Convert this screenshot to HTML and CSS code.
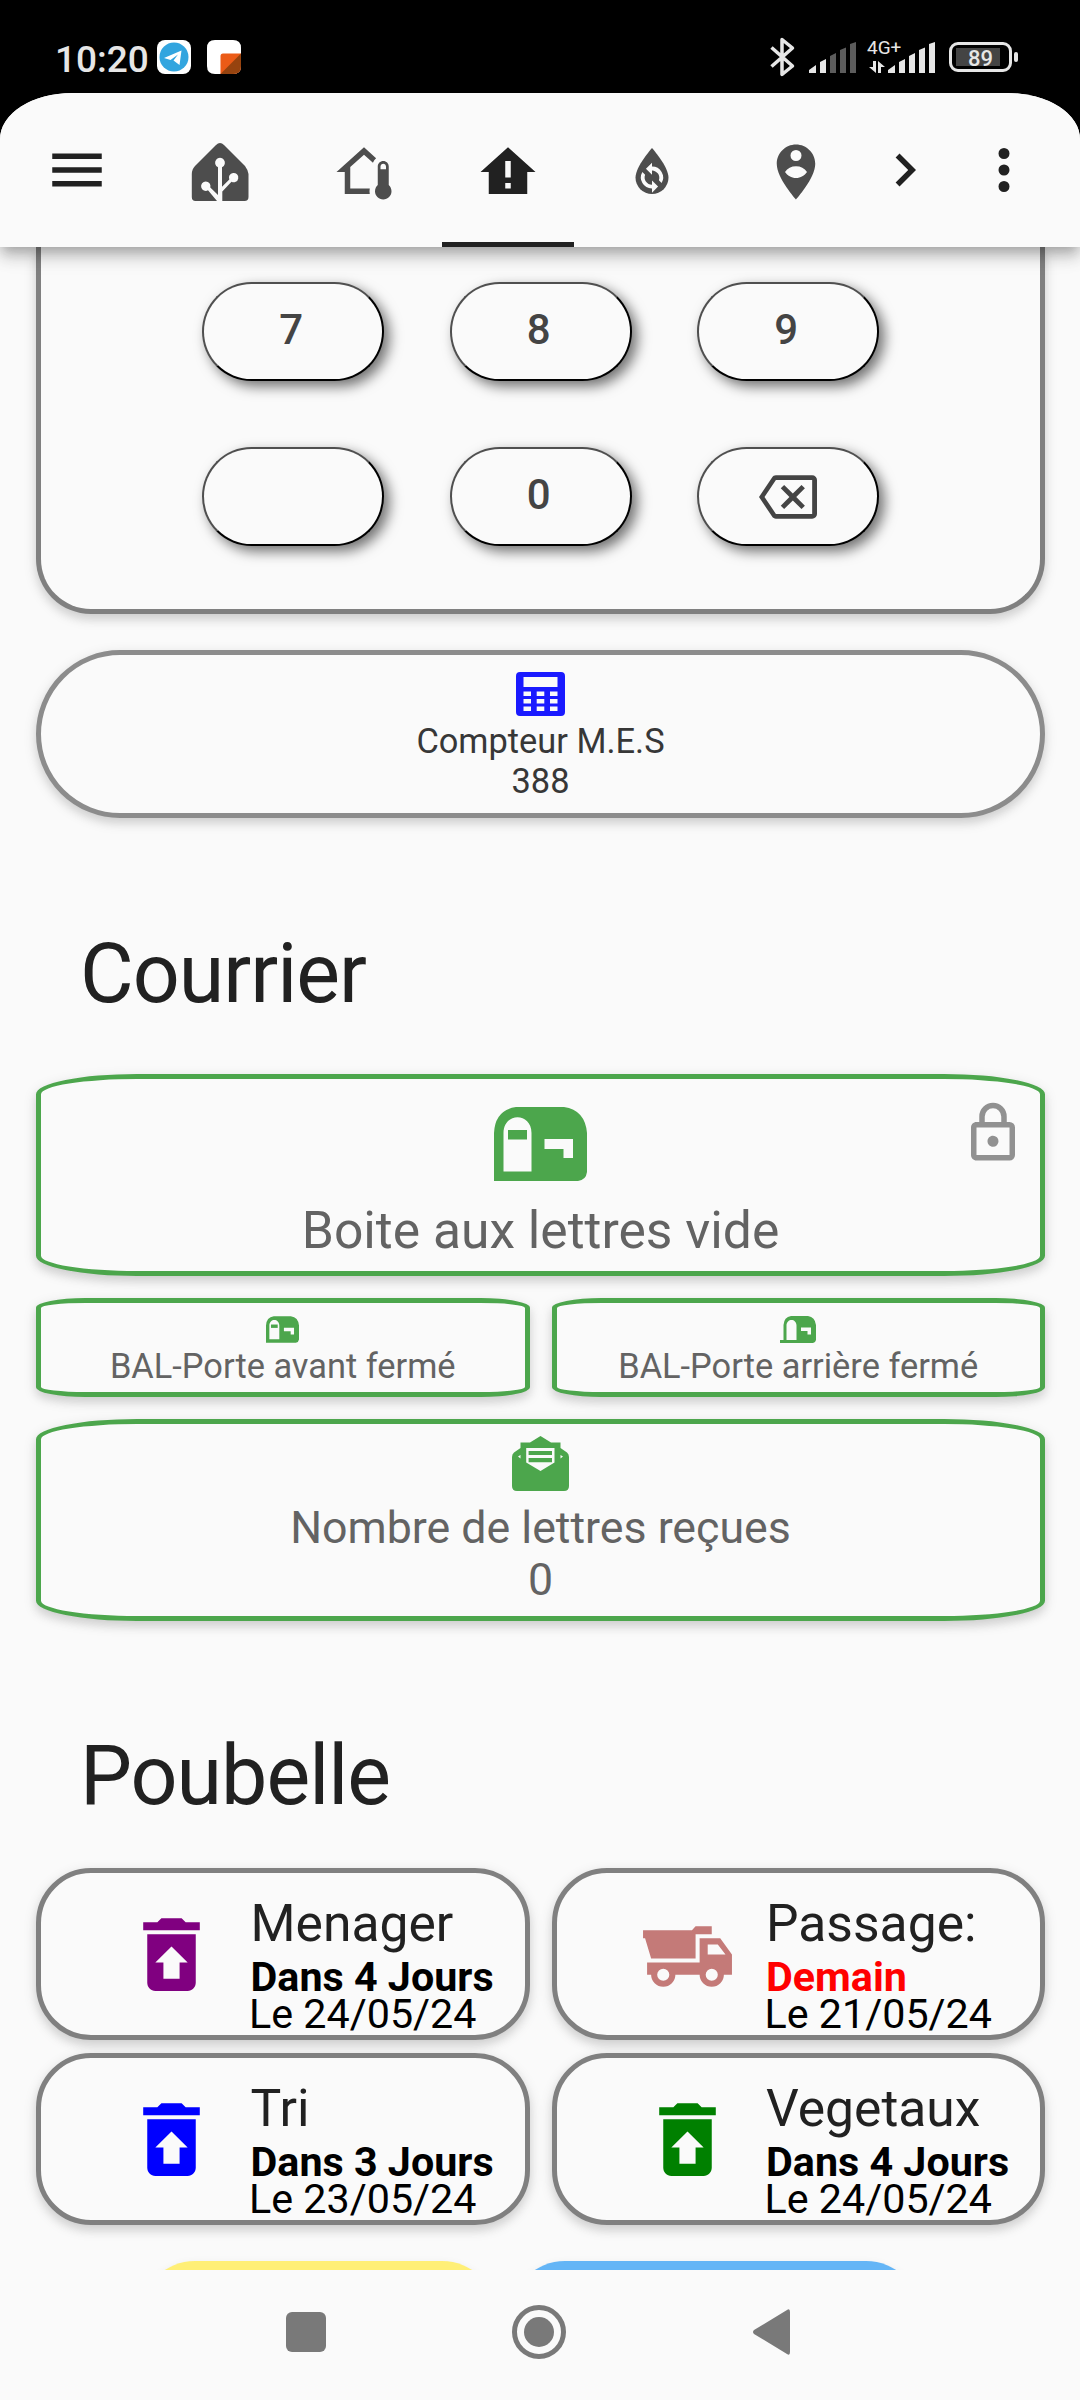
FILE: index.html
```html
<!DOCTYPE html>
<html lang="fr">
<head>
  <meta charset="UTF-8" />
  <meta name="viewport" content="width=device-width, initial-scale=1.0" />
  <title>Maison</title>
  <link rel="stylesheet" href="styles.css">
</head>
<body>
  <svg class="sprite" width="0" height="0">
    <symbol id="delete-restore" viewBox="0 0 24 24">
      <path d="M14,14H16L12,10L8,14H10V18H14V14M6,7H18V19C18,20.1 17.1,21 16,21H8C6.89,21 6,20.1 6,19V7M19,4V6H5V4H8.5L9.5,3H14.5L15.5,4H19Z"/>
    </symbol>
    <symbol id="mailbox" viewBox="0 0 93 74">
      <path fill-rule="evenodd" d="M0 74V26Q1 3 22 0H70Q91 3 93 26V65Q92 73 84 74ZM9.500 64.500H37.500V26C37.500 5 9.500 5 9.500 26ZM50.500 32V42H69.500V51H79V32Z"/>
      <path d="M14 23H33V32.500H14Z"/>
    </symbol>
  </svg>

  <div class="status-bar">
    <span class="time">10:20</span>
    <svg class="app-telegram" width="34" height="34" viewBox="0 0 34 34">
      <rect width="34" height="34" rx="8" fill="#fff"/>
      <circle cx="17" cy="17" r="14.500" fill="#32a5df"/>
      <path fill="#fff" d="M7 18L24.500 10.500L22.500 25L16.500 20.500L21 14.500L13.500 20Z"/>
    </svg>
    <svg class="app-orange" width="34" height="34" viewBox="0 0 34 34">
      <path fill="#fff" d="M8 0H26Q34 0 34 8V26Q34 34 26 34H8Q0 34 0 26V8Q0 0 8 0Z"/>
      <path fill="#eb5b17" d="M34 13.500H16Q13.500 13.500 13.500 16V34H26Q34 34 34 26Z"/>
      <path fill="#96430f" d="M34 13.500V26Q34 34 26 34H13.500Z"/>
    </svg>

    <svg class="bluetooth" width="25" height="40" viewBox="0 0 25 40">
      <path fill="none" stroke="#e6e6e6" stroke-width="3.500" stroke-linejoin="round" d="M1.500 10.500L22.500 29L12 37.500V2.500L22.500 11L1.500 29.500"/>
    </svg>
    <svg class="signal" width="48" height="31" viewBox="0 0 48 31" fill="#e6e6e6">
      <path d="M0 31V28L7 23V31ZM11 31V20L17 17V31Z"/>
      <path fill="#5c5c5c" d="M21 31V14L27 11V31ZM31 31V8L37 5.500V31ZM41 31V2L47 0V31Z"/>
    </svg>
    <div class="network">
      <span>4G+</span>
      <svg width="16" height="12" viewBox="0 0 16 12" fill="#e6e6e6">
        <path d="M4 0H7V12L0 6H4ZM9 12V0L16 6H12V12Z"/>
      </svg>
    </div>
    <svg class="signal signal-full" width="48" height="31" viewBox="0 0 48 31" fill="#e6e6e6">
      <path d="M0 31V28L7 23V31ZM11 31V20L17 17V31ZM21 31V14L27 11V31ZM31 31V8L37 5.500V31ZM41 31V2L47 0V31Z"/>
    </svg>
    <div class="battery">89</div>
  </div>

  <div class="app">
    <header>
      <svg class="icon menu" viewBox="0 0 24 24"><path d="M3,6H21V8H3V6M3,11H21V13H3V11M3,16H21V18H3V16Z"/></svg>
      <nav class="tabs">
        <div class="tab">
          <svg class="icon" viewBox="0 0 66 66">
            <path d="M29 6Q33 2 37 6L58 27Q61 31 61.500 35V58Q61.500 62 57.500 62H35.300V52.500L44.500 42.800A4.700 4.700 0 1 0 42.300 40.500L35 47.800V28.200A4.900 4.900 0 1 0 31 28.200V56L23.300 48.400A4.700 4.700 0 1 0 21 51.300L30 62H8.500Q4.800 62 4.800 58V35Q5 30 8 27Z"/>
          </svg>
        </div>
        <div class="tab">
          <svg class="icon" viewBox="0 0 24 24"><path d="M19 8C20.11 8 21 8.9 21 10V16.76C21.61 17.31 22 18.11 22 19C22 20.66 20.66 22 19 22C17.34 22 16 20.66 16 19C16 18.11 16.39 17.31 17 16.76V10C17 8.9 17.9 8 19 8M19 9C18.45 9 18 9.45 18 10V11H20V10C20 9.45 19.55 9 19 9M5 20V12H2L12 3L16.4 6.96C15.89 7.4 15.5 7.97 15.25 8.61L12 5.69L7 10.19V18H14.1L14 19L14.1 20H5Z"/></svg>
        </div>
        <div class="tab active">
          <svg class="icon" viewBox="0 0 24 24"><path fill-rule="evenodd" d="M12,3L2,12H5V20H19V12H22ZM11,8H13V14H11ZM11,16H13V18H11Z"/></svg>
        </div>
        <div class="tab">
          <svg class="icon" viewBox="0 0 24 24">
            <path d="M12,3.250C12,3.250 6,10 6,14A6,6 0 0,0 18,14C18,10 12,3.250 12,3.250Z"/>
            <path class="cutout" d="M12 8.600V10A4 4 0 0 1 15.500 16L14.500 15A2.600 2.600 0 0 0 12 11.500V13L9.800 10.800ZM12 19.500V18A4 4 0 0 1 8.500 12L9.500 13A2.600 2.600 0 0 0 12 16.600V15.100L14.200 17.300Z"/>
          </svg>
        </div>
        <div class="tab">
          <svg class="icon" viewBox="0 0 24 24"><path fill-rule="evenodd" d="M12,2C8.140,2 5,5.140 5,9C5,14.250 12,22 12,22S19,14.250 19,9C19,5.140 15.860,2 12,2ZM12,4A2,2 0 1,1 12,8A2,2 0 1,1 12,4ZM12,14.200C10.300,14.200 8.900,13.300 8,12C8.900,10.600 10.300,9.900 12,9.900S15.100,10.600 16,12C15.100,13.300 13.700,14.200 12,14.200Z"/></svg>
        </div>
      </nav>
      <svg class="icon chevron" viewBox="0 0 24 24"><path d="M8.590,16.580L13.170,12L8.590,7.410L10,6L16,12L10,18L8.590,16.580Z"/></svg>
      <svg class="icon more" viewBox="0 0 24 24"><path d="M12,16A2,2 0 1,1 12,20A2,2 0 1,1 12,16M12,10A2,2 0 1,1 12,14A2,2 0 1,1 12,10M12,4A2,2 0 1,1 12,8A2,2 0 1,1 12,4Z"/></svg>
    </header>

    <main>
      <section class="card keypad">
        <button>7</button>
        <button>8</button>
        <button>9</button>
        <button></button>
        <button>0</button>
        <button>
          <svg width="58" height="58" viewBox="0 0 24 24"><path d="M19,15.590L17.590,17L14,13.410L10.410,17L9,15.590L12.590,12L9,8.410L10.410,7L14,10.590L17.590,7L19,8.410L15.410,12L19,15.590M22,3A2,2 0 0,1 24,5V19A2,2 0 0,1 22,21H7C6.310,21 5.770,20.640 5.410,20.110L0,12L5.410,3.880C5.770,3.350 6.310,3 7,3H22M22,5H7L2.280,12L7,19H22V5Z"/></svg>
        </button>
      </section>

      <section class="card counter">
        <svg width="49" height="44" viewBox="0 0 49 44">
          <path fill-rule="evenodd" d="M4 0H45Q49 0 49 4V40Q49 44 45 44H4Q0 44 0 40V4Q0 0 4 0ZM7.500 5V15H41.500V5ZM7.500 19.500V24H15V19.500ZM20.700 19.500V24H28.300V19.500ZM34 19.500V24H41.500V19.500ZM7.500 27V31.500H15V27ZM20.700 27V31.500H28.300V27ZM34 27V31.500H41.500V27ZM7.500 34.500V39H15V34.500ZM20.700 34.500V39H28.300V34.500ZM34 34.500V39H41.500V34.500Z"/>
        </svg>
        <div>Compteur M.E.S</div>
        <div>388</div>
      </section>

      <h1>Courrier</h1>
      <div class="mail">
        <section class="card mail-main">
          <svg class="mail-icon" width="93" height="74"><use href="#mailbox"/></svg>
          <div>Boite aux lettres vide</div>
          <svg class="lock" viewBox="0 0 24 24"><path d="M12,17C10.890,17 10,16.100 10,15C10,13.890 10.890,13 12,13A2,2 0 0,1 14,15A2,2 0 0,1 12,17M18,20V10H6V20H18M18,8A2,2 0 0,1 20,10V20A2,2 0 0,1 18,22H6C4.890,22 4,21.100 4,20V10C4,8.890 4.890,8 6,8H7V6A5,5 0 0,1 12,1A5,5 0 0,1 17,6V8H18M12,3A3,3 0 0,0 9,6V8H15V6A3,3 0 0,0 12,3Z"/></svg>
        </section>
        <section class="card mail-door">
          <svg width="33" height="27"><use href="#mailbox"/></svg>
          <div>BAL-Porte avant fermé</div>
        </section>
        <section class="card mail-door">
          <svg width="36" height="27" viewBox="0 0 36 27"><path fill-rule="evenodd" d="M0 27V24H3.500V9Q4 1 11 0H28Q35 1 36 9V24Q35.500 26.500 33 27ZM6.500 24H16.500V9.500C16.500 2 6.500 2 6.500 9.500ZM21 11.500V15H27.500V18.500H31V11.500Z"/></svg>
          <div>BAL-Porte arrière fermé</div>
        </section>
        <section class="card mail-count">
          <svg width="57" height="55" viewBox="0 0 57 55">
            <path fill-rule="evenodd" d="M28.500 0L39 6.500H48.500V12L55 16.500Q57 18 57 21V50Q57 55 52 55H5Q0 55 0 50V21Q0 18 2 16.500L8.500 12V6.500H18ZM14.200 12V26.500L28.500 35L42.500 26.500V12ZM6 20.500L8.500 22.500V19ZM51 20.500L48.500 22.500V19Z"/>
            <path d="M16.600 15H40V19H16.600ZM16.600 22H40V26.300H16.600Z"/>
          </svg>
          <div>Nombre de lettres reçues</div>
          <div>0</div>
        </section>
      </div>

      <h1 class="title-bins">Poubelle</h1>
      <div class="bins">
        <section class="card bin household">
          <svg><use href="#delete-restore"/></svg>
          <div>
            <div class="name">Menager</div>
            <div class="when">Dans 4 Jours</div>
            <div class="date">Le 24/05/24</div>
          </div>
        </section>
        <section class="card bin truck">
          <svg viewBox="0 0 24 24">
            <path d="M1 6H13.100L14 5H18V7H14V13H3L1.500 8H1Z"/>
            <path fill-rule="evenodd" d="M15 8H20.100L23 12V17H21A3 3 0 0 1 15 17H9A3 3 0 0 1 3 17H2V14H15ZM17 9.500V12H21.400L19.500 9.500ZM6 15.500A1.500 1.500 0 1 0 6 18.500A1.500 1.500 0 1 0 6 15.500ZM18 15.500A1.500 1.500 0 1 0 18 18.500A1.500 1.500 0 1 0 18 15.500Z"/>
          </svg>
          <div>
            <div class="name">Passage:</div>
            <div class="when soon">Demain</div>
            <div class="date">Le 21/05/24</div>
          </div>
        </section>
        <section class="card bin sorting">
          <svg><use href="#delete-restore"/></svg>
          <div>
            <div class="name">Tri</div>
            <div class="when">Dans 3 Jours</div>
            <div class="date">Le 23/05/24</div>
          </div>
        </section>
        <section class="card bin garden">
          <svg><use href="#delete-restore"/></svg>
          <div>
            <div class="name">Vegetaux</div>
            <div class="when">Dans 4 Jours</div>
            <div class="date">Le 24/05/24</div>
          </div>
        </section>
      </div>

      <div class="chips">
        <div class="chip yellow"></div>
        <div class="chip blue"></div>
      </div>
    </main>
  </div>

  <footer>
    <svg width="40" height="40" viewBox="0 0 40 40"><rect width="40" height="40" rx="6"/></svg>
    <svg class="nav-home" width="54" height="54" viewBox="0 0 54 54"><circle cx="27" cy="27" r="24.500" fill="none" stroke="#797979" stroke-width="5"/><circle cx="27" cy="27" r="15"/></svg>
    <svg class="nav-back" width="38" height="46" viewBox="0 0 38 46"><path d="M1 21L34 1Q37 -1 37 3V43Q37 47 34 45L1 25Q-1 23 1 21Z"/></svg>
  </footer>
</body>
</html>
```
FILE: styles.css
```css
* {
  box-sizing: border-box;
}
body {
  margin: 0;
  height: 2400px;
  display: flex;
  flex-direction: column;
  background-color: #000;
  color: #212121;
  font-family: Roboto, sans-serif;
  overflow: hidden;
}
svg {
  display: block;
  flex-shrink: 0;
}
.sprite {
  position: absolute;
}

/* status bar */
.status-bar {
  height: 93px;
  flex-shrink: 0;
  display: flex;
  align-items: flex-start;
  padding: 38px 62px 0 55px;
  color: #e6e6e6;
}
.time {
  width: 102px;
  font-size: 37px;
  font-weight: 500;
  line-height: 43px;
}
.app-telegram {
  margin-top: 2px;
}
.app-orange {
  margin: 2px 0 0 16px;
}
.bluetooth {
  margin: -1px 14px 0 auto;
}
.signal {
  margin-top: 4px;
}
.network {
  width: 31px;
  margin-left: 10px;
  font-size: 19px;
  line-height: 20px;
}
.network span {
  display: block;
  white-space: nowrap;
}
.network svg {
  margin: 3px 0 0 2px;
}
.signal-full {
  margin-left: -10px;
}
.battery {
  position: relative;
  width: 63px;
  height: 30px;
  margin: 4px 6px 0 13px;
  border: 3px solid #e6e6e6;
  border-radius: 9px;
  background: linear-gradient(90deg, #444 44px, transparent 44px) no-repeat 4px 3px / 44px 18px;
  font-size: 22px;
  font-weight: 500;
  line-height: 27px;
  text-align: center;
}
.battery::after {
  content: "";
  position: absolute;
  right: -9px;
  top: 7px;
  width: 4px;
  height: 10px;
  border-radius: 2px;
  background-color: #e6e6e6;
}

/* app */
.app {
  flex: 1;
  min-height: 0;
  display: flex;
  flex-direction: column;
  background-color: #fafafa;
  border-radius: 72px 72px 0 0 / 46px 46px 0 0;
  overflow: hidden;
}
header {
  position: relative;
  z-index: 1;
  height: 154px;
  flex-shrink: 0;
  display: flex;
  align-items: center;
  padding-left: 44px;
  background-color: #fafafa;
  box-shadow: 0 5.5px 11px -2.75px rgba(0,0,0,0.2), 0 11px 13.75px 0 rgba(0,0,0,0.14), 0 2.75px 27.5px 0 rgba(0,0,0,0.12);
}
.icon {
  width: 66px;
  height: 66px;
  fill: #212121;
}
.tabs {
  display: flex;
  align-self: stretch;
  margin-left: 38px;
}
.tab {
  width: 132px;
  margin: 0 6px;
  padding-top: 46px;
  border-bottom: 5px solid transparent;
}
.tab .icon {
  margin: 0 auto;
  fill: #4d4d4d;
}
.tab.active {
  border-color: #212121;
}
.tab.active .icon {
  fill: #212121;
}
.icon .cutout {
  fill: #fafafa;
}
.chevron {
  margin-left: 4px;
}
.more {
  margin-left: 33px;
}

main {
  flex: 1;
  min-height: 0;
  padding: 0 35px 0 36px;
  overflow: hidden;
}
.card {
  border: 5px solid #808080;
  border-radius: 55px;
  background-color: #fafafa;
  box-shadow: 0 5.5px 8px 0 rgba(0,0,0,0.08), 0 4px 14px 0 rgba(0,0,0,0.12);
}

/* keypad */
.keypad {
  height: 367px;
  display: grid;
  grid-template-columns: repeat(3, 182px);
  grid-auto-rows: 99px;
  column-gap: 65.5px;
  row-gap: 66px;
  justify-content: center;
  padding-top: 35px;
  border-top: none;
  border-radius: 0 0 55px 55px;
}
button {
  display: flex;
  align-items: center;
  justify-content: center;
  padding: 0 0 5px;
  border: 2px solid;
  border-color: #4f4f4f #000 #000 #4f4f4f;
  border-radius: 50px;
  background-color: #fafafa;
  box-shadow: 5.5px 5.5px 13px rgba(0,0,0,0.55);
  color: #444;
  font-family: inherit;
  font-size: 42px;
  font-weight: 500;
  letter-spacing: 3.4px;
}
button svg {
  fill: #444;
  margin-top: 5px;
}

.counter {
  height: 168px;
  margin-top: 36px;
  padding-top: 17px;
  border-color: #8c8c8c;
  border-radius: 84px;
  color: #373737;
  font-size: 34.4px;
  line-height: 39.7px;
  text-align: center;
}
.counter svg {
  margin: 0 auto 6px;
  fill: #1a1aff;
}

h1 {
  margin: 108px 0 52px 44px;
  font-size: 82.5px;
  font-weight: 400;
  letter-spacing: -0.012em;
  line-height: 96px;
}
.title-bins {
  margin: 107px 0 44px 44px;
}

/* mailbox */
.mail {
  display: grid;
  grid-template-columns: 1fr 1fr;
  gap: 22px;
}
.mail .card {
  border-color: #4ca64c;
  border-radius: 10%;
  color: #636363;
  text-align: center;
}
.mail svg {
  margin: 0 auto;
  fill: #4ca64c;
}
.mail-main {
  position: relative;
  grid-column: span 2;
  height: 202px;
  padding-top: 28px;
  font-size: 51.6px;
  line-height: 61px;
}
.mail-main .mail-icon {
  margin-bottom: 19px;
}
.mail-main .lock {
  position: absolute;
  top: 21px;
  right: 14px;
  width: 66px;
  height: 66px;
  fill: #919191;
}
.mail-door {
  height: 99px;
  padding-top: 13px;
  font-size: 34.4px;
  line-height: 40px;
}
.mail-door svg {
  margin-bottom: 3px;
}
.mail-count {
  grid-column: span 2;
  height: 202px;
  padding-top: 12px;
  font-size: 44.7px;
  line-height: 51.5px;
}
.mail-count svg {
  margin-bottom: 12px;
}

/* bins */
.bins {
  display: grid;
  grid-template-columns: 1fr 1fr;
  gap: 13px 22px;
}
.bin {
  height: 172px;
  display: flex;
  gap: 29px;
  padding: 21px 0 0 82px;
  white-space: nowrap;
}
.bin svg {
  width: 97px;
  height: 97px;
  margin-top: 12px;
}
.household svg { fill: purple; }
.sorting svg { fill: blue; }
.garden svg { fill: green; }
.truck svg { fill: #c47a78; }
.name {
  padding-left: 1.5px;
  font-size: 51.6px;
  line-height: 60px;
  margin-bottom: 5px;
}
.when, .date {
  color: #000;
  font-size: 41.25px;
  line-height: 37px;
}
.when {
  padding-left: 1.5px;
  font-weight: bold;
}
.when.soon {
  color: red;
}

.chips {
  display: flex;
  gap: 13px;
  margin: 36px 0 0 104px;
}
.chip {
  height: 120px;
  border-radius: 55px;
  box-shadow: 0 3px 10px rgba(0,0,0,0.08);
}
.yellow {
  width: 357px;
  background-color: #ffef76;
}
.blue {
  width: 411px;
  background-color: #64b5f6;
}

/* android nav */
footer {
  height: 130px;
  flex-shrink: 0;
  display: flex;
  align-items: center;
  padding: 0 0 6px 286px;
  background-color: #fafafa;
}
footer svg {
  fill: #797979;
}
.nav-home {
  margin-left: 186px;
}
.nav-back {
  margin-left: 187px;
}
```
